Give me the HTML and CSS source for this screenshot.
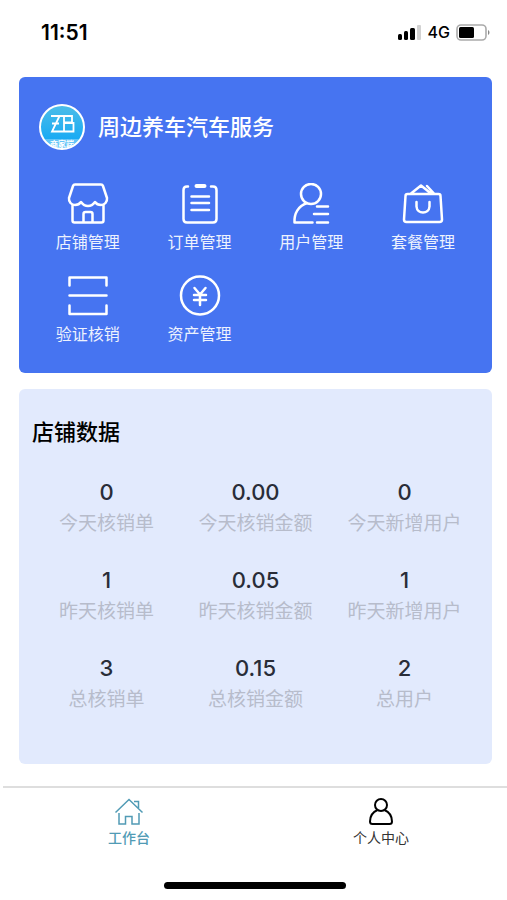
FILE: index.html
```html
<!DOCTYPE html>
<html lang="zh-CN">
<head>
<meta charset="utf-8">
<meta name="viewport" content="width=device-width, initial-scale=1">
<title>周边养车汽车服务</title>
<link rel="stylesheet" href="styles.css">
</head>
<body>
<div class="screen">
  <header class="status">
    <span class="status-time">11:51</span>
    <span class="status-right">
      <svg width="24" height="16" viewBox="0 0 24 16" aria-hidden="true">
        <rect x="0" y="10" width="4" height="6" rx="1.5"/>
        <rect x="6" y="7" width="4" height="9" rx="1.5"/>
        <rect x="12" y="4" width="5" height="12" rx="1.5"/>
        <rect x="19" y="1" width="4" height="15" rx="1" fill="#d2d2d2"/>
      </svg>
      <span class="network">4G</span>
      <svg width="34" height="17" viewBox="0 0 34 17" aria-hidden="true">
        <rect x="1" y="1" width="29" height="15" rx="4" fill="none" stroke="#aaa" stroke-width="1.6"/>
        <rect x="3" y="3" width="15" height="11" rx="1.5"/>
        <path d="M32 6v5c2-1 2-4 0-5z" fill="#888"/>
      </svg>
    </span>
  </header>

  <main class="content">
    <section class="card shop">
      <div class="shop-head">
        <svg class="logo" width="46" height="46" viewBox="0 0 46 46" aria-hidden="true">
          <defs>
            <linearGradient id="sky" x1="0" y1="0" x2="0" y2="1"><stop offset="0" stop-color="#4dbde8"/><stop offset="1" stop-color="#0aa5f7"/></linearGradient>
            <clipPath id="disc"><circle cx="23" cy="23" r="21"/></clipPath>
          </defs>
          <circle cx="23" cy="23" r="22" fill="url(#sky)"/>
          <g clip-path="url(#disc)">
            <rect x="0" y="35" width="46" height="11" fill="#62c4f7"/>
            <text x="23" y="43" class="logo-text">商家端</text>
          </g>
          <path d="M12 12H33V18.500H25M13 19.500H20M20.500 12L13 27.500H34.500V19H25M25 12V27.500" fill="none" stroke="#fff" stroke-width="1.800"/>
          <circle cx="23" cy="23" r="22" fill="none" stroke="#fff" stroke-width="2"/>
        </svg>
        <h1 class="shop-name">周边养车汽车服务</h1>
      </div>
      <nav class="menu" aria-label="管理">
        <a class="menu-item" href="#shop">
          <svg class="icon" viewBox="0 0 42 42"><path d="M8 1.500H34Q35.500 1.500 36 3L40 15C40.500 19 37.500 22 34 22Q30 22 28 19Q25 23 21 23Q17 23 14 19Q12 22 8 22C4.500 22 1.500 19 2 15L6 3Q6.500 1.500 8 1.500ZM5.500 22V37.500Q5.500 39.500 7.500 39.500H34.500Q36.500 39.500 36.500 37.500V22M16.500 39V31Q16.500 29 18.500 29H23.500Q25.500 29 25.500 31V39"/></svg>
          <span>店铺管理</span>
        </a>
        <a class="menu-item" href="#orders">
          <svg class="icon" viewBox="0 0 42 42"><path d="M9 3.500H8Q4.500 3.500 4.500 7V36Q4.500 39.500 8 39.500H34Q37.500 39.500 37.500 36V7Q37.500 3.500 34 3.500H32M12.500 13.500H30M12.500 20H30M12.500 27H30"/><path d="M17.500 3H25.500" stroke-width="4"/></svg>
          <span>订单管理</span>
        </a>
        <a class="menu-item" href="#users">
          <svg class="icon" viewBox="0 0 42 42"><circle cx="21" cy="11" r="10"/><path d="M17 20C8 23 4 31 4.500 39.500H22.500M27 23.500H38M24 31H38M27 39.500H38"/></svg>
          <span>用户管理</span>
        </a>
        <a class="menu-item" href="#packages">
          <svg class="icon" viewBox="0 0 42 42"><path d="M5.500 11H36.500Q38.500 11 38.500 13L40 36.500Q40 39 37.500 39H4.500Q2 39 2 36.500L3.500 13Q3.500 11 5.500 11ZM9 10.500L19 2.500 29 10.500M25 3L32 10.500M14.500 19V23.500C15 31.500 27 31.500 27.500 23.500V19"/></svg>
          <span>套餐管理</span>
        </a>
        <a class="menu-item" href="#verify">
          <svg class="icon" viewBox="0 0 42 42"><path d="M2.500 10.500V2.500H39.500V10.500M2.500 20.500H39.500M2.500 30.500V39H39.500V30.500"/></svg>
          <span>验证核销</span>
        </a>
        <a class="menu-item" href="#assets">
          <svg class="icon" viewBox="0 0 42 42"><circle cx="21" cy="20.500" r="19"/><path d="M15.500 13L21 19.500 26.500 13M15 20H27M15 25H27M21 20V30"/></svg>
          <span>资产管理</span>
        </a>
      </nav>
    </section>

    <section class="card data">
      <h2 class="data-title">店铺数据</h2>
      <dl class="stats">
        <div class="stat"><dt>今天核销单</dt><dd>0</dd></div>
        <div class="stat"><dt>今天核销金额</dt><dd>0.00</dd></div>
        <div class="stat"><dt>今天新增用户</dt><dd>0</dd></div>
        <div class="stat"><dt>昨天核销单</dt><dd>1</dd></div>
        <div class="stat"><dt>昨天核销金额</dt><dd>0.05</dd></div>
        <div class="stat"><dt>昨天新增用户</dt><dd>1</dd></div>
        <div class="stat"><dt>总核销单</dt><dd>3</dd></div>
        <div class="stat"><dt>总核销金额</dt><dd>0.15</dd></div>
        <div class="stat"><dt>总用户</dt><dd>2</dd></div>
      </dl>
    </section>
  </main>

  <footer class="footer">
    <nav class="tabs" aria-label="主导航">
      <a class="tab active" href="#work" aria-current="page">
        <svg class="tab-icon" viewBox="0 0 30 30"><path d="M1.500 15.500L15 2.500 28.500 15.500M20 4.500H24.500V11M5 16V27H11.500V19.500H18V27H25V16"/></svg>
        <span>工作台</span>
      </a>
      <a class="tab" href="#me">
        <svg class="tab-icon bold" viewBox="0 0 30 30"><circle cx="15" cy="8" r="6"/><path d="M11.500 13C7 15 4 19.500 4 24.500Q4 27 6.500 27H23.500Q26 27 26 24.500C26 19.500 23 15 18.500 13"/></svg>
        <span>个人中心</span>
      </a>
    </nav>
    <div class="home-bar"></div>
  </footer>
</div>
</body>
</html>
```
FILE: styles.css
```css
* {
  box-sizing: border-box;
}

body {
  margin: 0;
  background: #fff;
  color: #000;
  font-family: Inter, "Noto Sans CJK SC", sans-serif;
}

a {
  color: inherit;
  text-decoration: none;
}

h1, h2, dl, dd {
  margin: 0;
}

.screen {
  display: flex;
  flex-direction: column;
  min-height: 100vh;
  padding-left: 3px;
}

.status {
  display: flex;
  align-items: center;
  justify-content: space-between;
  height: 64px;
  padding: 0 17px 0 38px;
}

.status-time {
  font-size: 21px;
  font-weight: 600;
}

.status-right {
  display: flex;
  align-items: center;
  gap: 6px;
}

.network {
  font-size: 16px;
  font-weight: 500;
}

.content {
  display: flex;
  flex-direction: column;
  gap: 16px;
  padding: 13px 15px 22px 16px;
}

.card {
  padding: 0 13px;
  border-radius: 6px;
}

.shop {
  padding-top: 27px;
  padding-bottom: 27px;
  background: #4674f1;
  color: #fff;
}

.shop-head {
  display: flex;
  align-items: center;
  gap: 13px;
  padding-left: 7px;
}

.logo-text {
  fill: #fff;
  font-size: 8px;
  font-weight: 700;
  text-anchor: middle;
}

.shop-name {
  font-size: 22px;
  font-weight: 500;
  line-height: 32px;
}

.menu {
  display: grid;
  grid-template-columns: repeat(4, 1fr);
  row-gap: 21px;
  padding-top: 33px;
}

.menu-item {
  display: flex;
  flex-direction: column;
  align-items: center;
  gap: 5px;
  font-size: 16px;
  line-height: 24px;
}

.menu-item span {
  color: #edf2fe;
}

.icon {
  width: 42px;
  height: 42px;
}

.icon,
.tab-icon {
  fill: none;
  stroke: currentColor;
  stroke-width: 2.5;
  stroke-linecap: round;
  stroke-linejoin: round;
}

.data {
  padding-top: 27px;
  padding-bottom: 50px;
  background: #e2eafd;
}

.data-title {
  font-size: 22px;
  font-weight: 500;
  line-height: 32px;
}

.stats {
  display: grid;
  grid-template-columns: repeat(3, 1fr);
  row-gap: 26px;
  padding-top: 28px;
}

.stat {
  display: flex;
  flex-direction: column-reverse;
  align-items: center;
  gap: 2px;
}

.stat dt {
  color: #b7bccb;
  font-size: 19px;
  line-height: 28px;
}

.stat dd {
  color: #292d38;
  font-size: 22px;
  font-weight: 500;
  line-height: 32px;
}

.footer {
  display: flex;
  flex-direction: column;
  flex: 1;
  border-top: 2px solid #dedede;
}

.tabs {
  display: grid;
  grid-template-columns: repeat(2, 1fr);
  padding-top: 8px;
}

.tab {
  display: flex;
  flex-direction: column;
  align-items: center;
  color: #333;
  font-size: 14px;
  line-height: 20px;
}

.tab.active {
  color: #519bb5;
  font-weight: 500;
}

.tab-icon {
  width: 30px;
  height: 32px;
  stroke-width: 1.5;
  stroke-linecap: butt;
  stroke-linejoin: miter;
}

.tab-icon.bold {
  stroke: #000;
  stroke-width: 2;
}

.home-bar {
  width: 36%;
  height: 7px;
  margin: auto auto 11px;
  border-radius: 4px;
  background: #000;
}
```
